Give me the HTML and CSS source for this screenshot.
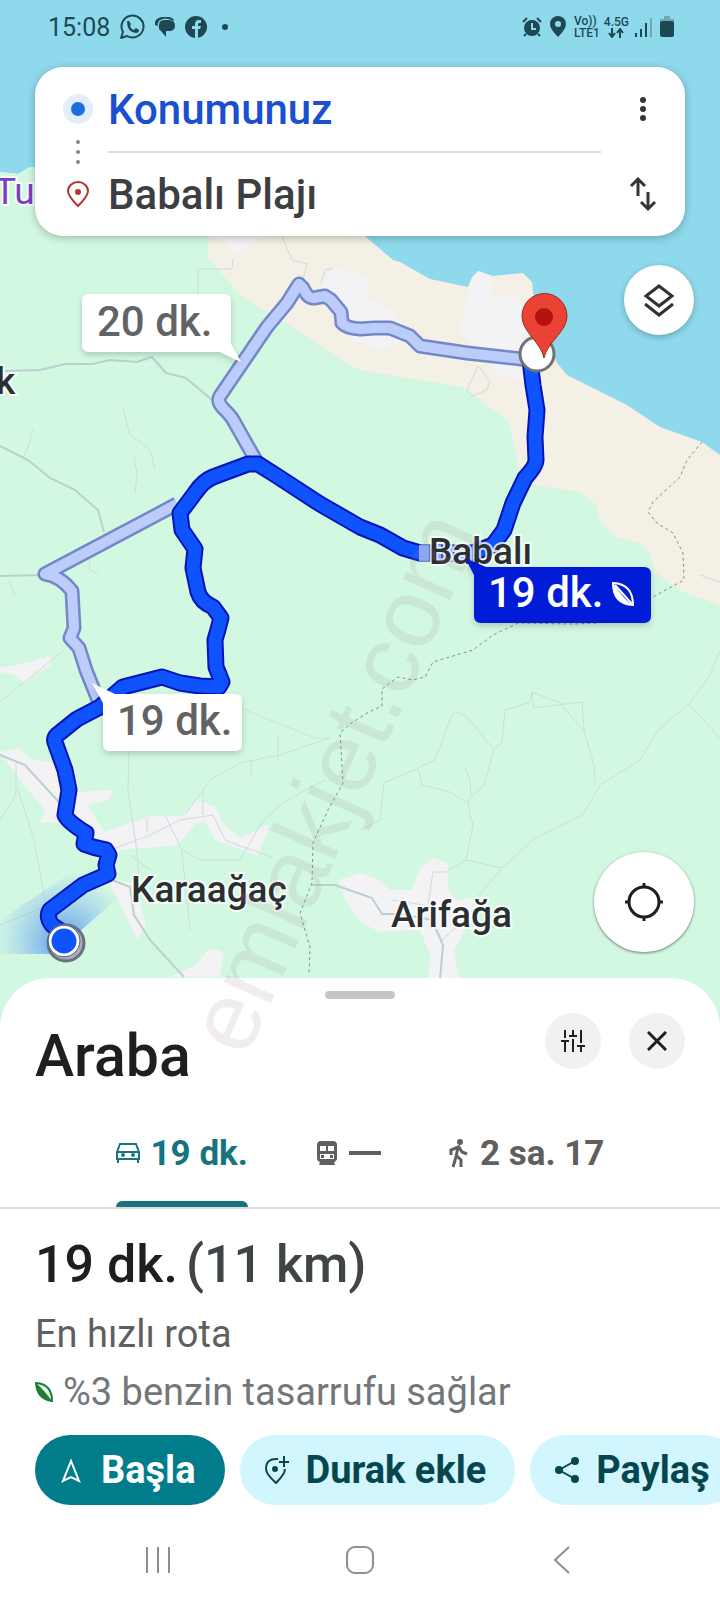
FILE: index.html
```html
<!DOCTYPE html>
<html lang="tr">
<head>
    <meta charset="UTF-8">
    <meta name="viewport" content="width=device-width, initial-scale=1.0">
    <title>Babalı Plajı</title>
    <link rel="stylesheet" href="styles.css">
</head>
<body>
    <div class="map">
        <svg class="map-canvas" viewBox="0 0 720 1040">
            <defs>
                <radialGradient id="beam" gradientUnits="userSpaceOnUse" cx="64" cy="941" r="72">
                    <stop offset="0" stop-color="#4a8df0" stop-opacity="0.9"/>
                    <stop offset="1" stop-color="#8fc0f0" stop-opacity="0"/>
                </radialGradient>
                <filter id="shadow" x="-20%" y="-20%" width="140%" height="160%">
                    <feDropShadow dx="0" dy="3" stdDeviation="3" flood-color="#000" flood-opacity="0.18"/>
                </filter>
            </defs>

            <!-- land -->
            <rect width="720" height="1040" fill="#8ed9ec"/>
            <path d="M0 172L18 174L30 167H200V232H360L393 260L400 262L430 279L468 287L472 277L478 271L493 276L523 273L532 282L534 300L557 363L567 375L627 405L660 427L702 442L720 455V1040H0Z" fill="#f5f0e5"/>
            <path d="M0 172L18 174L30 167H208V258L216 267L240 295L300 332L345 362L360 370L420 380L462 387L480 400L508 420L513 440L519 468L535 485L580 492L597 505L599 520L617 538L640 543L650 553L655 572L680 590L720 606V1040H0Z" fill="#d2f8e2"/>
            <g fill="#f3f2f5">
                <path d="M208 236H262L250 245L235 255L222 240Z"/>
                <path d="M322 284L333 266L367 277L368 298L392 310L404 340L385 350L350 340L325 300Z"/>
                <path d="M470 283L478 271L494 278L490 297L514 296L530 310V384L500 375L480 350L460 334Z"/>
                <path d="M0 752L18 748L32 760L68 764L76 792L112 790L110 799L88 806L104 832L150 816L182 816L196 800L215 806L222 822L240 838L270 824L258 856L215 840L205 822L195 824L178 845L120 850L110 878L134 884L146 925L138 940L108 880L90 836L70 824L40 822L45 810L16 775Z"/>
                <path d="M0 668L30 662L50 656L52 664L24 682L12 674L0 672Z"/>
                <path d="M170 977L195 965L210 948L224 952L220 977Z"/>
                <path d="M338 880L360 873L376 878L390 890H412L420 868L434 858L448 864V888L456 900L474 898L472 918L454 950L460 985H428L430 955L420 930L380 932L360 922L345 900Z"/>
            </g>

            <!-- minor roads -->
            <g class="road">
                <path d="M198 294V269H232L233 258M282 236L292 260L307 264L303 280M321 283L325 270L333 268"/>
                <path d="M123 407L130 435L142 443L151 452L155 470M134 456L137 475L135 493M33 430L28 447L22 460M89 560L90 570L98 574M9 580L15 597"/>
                <path d="M467 390L478 366L490 380L487 390L472 396ZM700 575L720 582"/>
                <path d="M0 702L64 650M18 790L34 840L45 900M0 820L16 795V762M0 925L50 905"/>
                <path d="M240 708L315 738H330M330 738L280 755L240 763L210 780L185 815M278 760V735M251 760V777M129 750L128 790L137 852L140 900M110 850L150 835L180 820L213 815L225 840L240 846L272 857M203 790V815M147 818V832M165 815L182 850L200 860H240L262 822L280 805L302 792L325 780"/>
                <path d="M720 650L710 675L689 704L658 730L640 760L600 785L583 815L535 838L502 868L475 900M689 704L720 738"/>
                <path d="M361 830L380 820L384 783L418 768L435 760L452 715L458 712L468 718L494 750L486 778L484 785L468 800L470 815L473 825L466 860L502 868M418 768L422 785L450 792L466 802M494 750L502 742L505 710L530 702L532 692L560 703L584 731L594 765L595 785M532 692L534 708L582 702L584 731M465 767L470 780L471 795"/>
                <path d="M466 860L446 872H433L428 905M442 940L475 910M392 900L430 906M182 852L190 930M130 855L150 870"/>
            </g>
            <g class="main-road">
                <path d="M5 371L40 370L65 364H93L110 360L137 362L152 357L166 373L186 378L212 400"/>
                <path d="M0 446L28 460L50 478L75 490L98 510L104 532M0 576L45 575"/>
                <path d="M0 755L25 765L68 812M112 880L130 887L134 915L150 940L184 977M312 885H335L372 898L382 914H400L432 920L443 945L440 980"/>
            </g>
            <path class="border-line" d="M702 442L687 460L680 477L653 502L648 512L657 523L673 533L683 553L684 580L653 597L597 623L573 624L518 623L493 635L473 650L433 662L425 677L413 680L398 677L382 689L382 706L367 713L350 724L340 733L343 783L328 810L313 843L312 883L300 913L310 947L309 975"/>

            <path d="M64 945L118 898L75 870L0 920V954H64Z" fill="url(#beam)"/>

            <!-- routes -->
            <path class="alt-edge" d="M258 464L232 418Q228 413 222 407Q217 401 220 396L267 327L287 303L299 284L303 288Q308 299 314 298L325 296L331 300L341 312L342 323Q346 328 360 329L375 328H390L410 336L420 346L467 353L530 360"/>
            <path class="alt-fill" d="M258 464L232 418Q228 413 222 407Q217 401 220 396L267 327L287 303L299 284L303 288Q308 299 314 298L325 296L331 300L341 312L342 323Q346 328 360 329L375 328H390L410 336L420 346L467 353L530 360"/>
            <path class="alt-edge" d="M177 504L45 574Q60 576 72 591L74 628L70 638L79 648L86 670L100 705"/>
            <path class="alt-fill" d="M177 504L45 574Q60 576 72 591L74 628L70 638L79 648L86 670L100 705"/>
            <path class="route-edge" d="M530 360L533 385L537 410L535 437L536 460Q536 466 525 478L513 503L504 530L493 545L473 553H420L403 548L380 535L360 527L320 504L277 476L258 464H248L213 477Q203 481 195 493L180 513L182 530L195 549L193 568L198 592Q201 602 213 607L221 618Q218 630 215 640L216 667L222 682L219 687L200 686L180 683L162 677L123 687L100 707L77 719L57 735Q53 739 56 745L65 770L69 790L65 815Q68 822 86 833L84 844Q94 848 106 850L109 855L106 865L108 874L83 885L50 910Q46 917 52 925L62 932"/>
            <path class="route-fill" d="M530 360L533 385L537 410L535 437L536 460Q536 466 525 478L513 503L504 530L493 545L473 553H420L403 548L380 535L360 527L320 504L277 476L258 464H248L213 477Q203 481 195 493L180 513L182 530L195 549L193 568L198 592Q201 602 213 607L221 618Q218 630 215 640L216 667L222 682L219 687L200 686L180 683L162 677L123 687L100 707L77 719L57 735Q53 739 56 745L65 770L69 790L65 815Q68 822 86 833L84 844Q94 848 106 850L109 855L106 865L108 874L83 885L50 910Q46 917 52 925L62 932"/>
            <path d="M424 545V561M436 545V561M448 545V561M460 546V560" stroke="#c5d2fa" stroke-width="10" opacity="0.7"/>

            <!-- current position -->
            <circle cx="66" cy="943" r="18" fill="#a9adb5" stroke="#6b7080" stroke-width="3"/>
            <circle cx="64" cy="941" r="14" fill="#0f53ff" stroke="#fff" stroke-width="3"/>
            <circle cx="64" cy="941" r="16" fill="none" stroke="#566a9c" stroke-width="1"/>

            <!-- destination -->
            <circle cx="537" cy="354" r="17" fill="#fff" stroke="#6f7378" stroke-width="3"/>
            <path d="M544 358C541 342 522 332 522 316A22 22 0 0 1 567 316C567 332 547 342 544 358Z" fill="#ea4335" stroke="#a52714" stroke-width="1"/>
            <circle cx="544" cy="317" r="9" fill="#b31412"/>

            <g class="place">
                <text x="-4" y="394">k</text>
                <text x="429" y="564">Babalı</text>
                <text x="131" y="902">Karaağaç</text>
                <text x="391" y="927">Arifağa</text>
            </g>
            <text class="poi" x="-6" y="204">Tuz</text>

            <g filter="url(#shadow)">
                <path d="M89 294H224Q231 294 231 301V344L241 362L220 352H89Q82 352 82 345V301Q82 294 89 294Z" fill="#fff"/>
                <path d="M92 683L115 694H235Q242 694 242 701V744Q242 751 235 751H110Q103 751 103 744V703Z" fill="#fff"/>
                <path d="M465 558L486 567H644Q651 567 651 574V616Q651 623 644 623H481Q474 623 474 616V575Z" fill="#021bd6"/>
            </g>
            <g class="callout">
                <text x="97" y="336">20 dk.</text>
                <text x="117" y="735">19 dk.</text>
                <text class="callout-active" x="488" y="607">19 dk.</text>
            </g>
            <path d="M613 583Q633 584 633 605Q613 604 613 583ZM615 585L632 604" fill="none" stroke="#fff" stroke-width="2"/>
            <path d="M613 583Q613 604 633 605Q626 602 613 583Z" fill="#fff"/>
        </svg>

        <header class="status-bar">
            <div class="status-left">
                <time>15:08</time>
                <svg width="26" height="26" viewBox="0 0 26 26">
                    <path d="M2 24L4 18A11 11 0 1 1 8 22Z" fill="none" stroke="#1f4854" stroke-width="2" stroke-linejoin="round"/>
                    <path d="M8 8Q9 6 10 7L12 10L11 12Q12 15 15 16L17 14L20 16Q20 19 17 19Q8 18 8 8Z" fill="#1f4854"/>
                </svg>
                <svg width="22" height="22" viewBox="0 0 22 22">
                    <path d="M1 9Q0 2 8 1H15Q20 2 20 5Q10 0 5 5Q3 8 4 10Z" fill="#1f4854"/>
                    <path d="M5 9Q5 4 11 4H15Q21 4 21 10Q21 15 15 15H12V21L7 15Q4 13 5 9Z" fill="#1f4854"/>
                </svg>
                <svg width="22" height="22" viewBox="0 0 22 22">
                    <circle cx="11" cy="11" r="11" fill="#1f4854"/>
                    <path d="M10 22V13H7V10H10V8Q10 4 14 4H16V7H14Q13 7 13 9V10H16L15 13H13V22Z" fill="#8ed9ec"/>
                </svg>
                <span class="status-dot"></span>
            </div>
            <div class="status-right">
                <svg width="20" height="20" viewBox="0 0 20 20">
                    <circle cx="10" cy="11" r="8" fill="#1f4854"/>
                    <path d="M1 5L5 1M19 5L15 1M4 17L2 19M16 17L18 19" stroke="#1f4854" stroke-width="2"/>
                    <path d="M10 6V12H14" fill="none" stroke="#8ed9ec" stroke-width="2"/>
                </svg>
                <svg width="24" height="22" viewBox="0 0 24 22">
                    <path d="M12 21Q4 13 4 8A8 8 0 0 1 20 8Q20 13 12 21Z" fill="#1f4854"/>
                    <circle cx="12" cy="8" r="3" fill="#8ed9ec"/>
                </svg>
                <span class="status-tiny">Vo))<br>LTE1</span>
                <span class="status-tiny">4.5G
                    <svg width="16" height="10" viewBox="0 0 16 10">
                        <path d="M4 0V9M1 5L4 9L7 5M12 10V1M9 5L12 1L15 5" fill="none" stroke="#1f4854" stroke-width="2"/>
                    </svg>
                </span>
                <svg width="22" height="20" viewBox="0 0 22 20">
                    <path d="M3 16V20M8 12V20M13 6V20" stroke="#1f4854" stroke-width="2"/>
                    <path d="M18 1V20" stroke="#6fa9b8" stroke-width="2"/>
                </svg>
                <svg width="16" height="22" viewBox="0 0 16 22">
                    <path d="M5 0H11V3H15V6H1V3H5Z" fill="#6fa9b8"/>
                    <rect x="1" y="5" width="14" height="16" rx="2" fill="#1f4854"/>
                </svg>
            </div>
        </header>

        <form class="directions">
            <label class="stop-icon" for="origin" aria-label="Başlangıç">
                <svg width="32" height="32" viewBox="0 0 32 32">
                    <circle cx="16" cy="16" r="15" fill="#e4edfb"/>
                    <circle cx="16" cy="16" r="7" fill="#1a6fe0"/>
                </svg>
            </label>
            <input class="origin" id="origin" type="text" value="Konumunuz">
            <button class="icon-button" type="button" aria-label="Diğer seçenekler">
                <svg width="24" height="28" viewBox="0 0 24 28" fill="#333639">
                    <circle cx="12" cy="5" r="3"/><circle cx="12" cy="14" r="3"/><circle cx="12" cy="23" r="3"/>
                </svg>
            </button>
            <svg class="stop-dots" width="4" height="26" viewBox="0 0 4 26" fill="#888">
                <circle cx="2" cy="3" r="2"/><circle cx="2" cy="13" r="2"/><circle cx="2" cy="23" r="2"/>
            </svg>
            <hr>
            <label class="stop-icon stop-end" for="destination" aria-label="Varış yeri">
                <svg width="24" height="28" viewBox="0 0 24 28">
                    <path d="M12 26Q2 16 2 11A10 9 0 0 1 22 11Q22 16 12 26Z" fill="none" stroke="#b3352d" stroke-width="2"/>
                    <circle cx="12" cy="12" r="3" fill="#b3352d"/>
                </svg>
            </label>
            <input id="destination" type="text" value="Babalı Plajı">
            <button class="icon-button" type="button" aria-label="Yer değiştir">
                <svg width="28" height="36" viewBox="0 0 28 36" fill="none" stroke="#333639" stroke-width="3">
                    <path d="M9 20V3M2 10L9 3L16 10M19 16V33M12 26L19 33L26 26"/>
                </svg>
            </button>
        </form>

        <button class="fab" aria-label="Katmanlar">
            <svg width="32" height="34" viewBox="0 0 32 34" fill="none" stroke="#2f3235" stroke-width="3">
                <path d="M16 3L29 13L16 23L3 13ZM2 21L16 32L30 21"/>
            </svg>
        </button>
        <button class="fab fab-locate" aria-label="Konumum">
            <svg width="40" height="40" viewBox="0 0 40 40" fill="none" stroke="#1d1f20" stroke-width="3">
                <circle cx="20" cy="20" r="15"/>
                <path d="M20 1V6M20 34V39M1 20H6M34 20H39"/>
            </svg>
        </button>
    </div>

    <main class="sheet">
        <div class="handle"></div>
        <div class="sheet-head">
            <h1>Araba</h1>
            <button class="round" aria-label="Rota seçenekleri">
                <svg width="26" height="24" viewBox="0 0 26 24" fill="none" stroke="#1f1f1f" stroke-width="2">
                    <path d="M5 1V9M1 12H9M5 12V23M13 1V6M9 7H17M13 10V23M21 1V14M17 17H25M21 17V23"/>
                </svg>
            </button>
            <button class="round" aria-label="Kapat">
                <svg width="20" height="20" viewBox="0 0 20 20" stroke="#1f1f1f" stroke-width="3">
                    <path d="M1 1L19 19M19 1L1 19"/>
                </svg>
            </button>
        </div>

        <div class="tabs" role="tablist">
            <button class="tab tab-active" role="tab" aria-selected="true">
                <svg width="24" height="22" viewBox="0 0 24 22" fill="none" stroke="currentColor" stroke-width="2">
                    <path d="M1 10L4 2H20L23 10V17H1ZM1 10H23M2 17V21M22 17V21"/>
                    <circle cx="7" cy="13" r="1"/><circle cx="17" cy="13" r="1"/>
                </svg>
                19 dk.
            </button>
            <button class="tab" role="tab" aria-selected="false">
                <svg width="22" height="26" viewBox="0 0 22 26">
                    <path fill="currentColor" fill-rule="evenodd" d="M5 1H17Q21 1 21 5V18Q21 21 18 22L19 25H3L4 22Q1 21 1 18V5Q1 1 5 1ZM4 6V11H10V6ZM12 6V11H18V6ZM4 14V19H18V14Z"/>
                    <path fill="currentColor" d="M5 15H8V18H5ZM14 15H17V18H14Z"/>
                </svg>
                <span class="dash" aria-label="Yok"></span>
            </button>
            <button class="tab" role="tab" aria-selected="false">
                <svg width="20" height="30" viewBox="0 0 20 30" fill="none" stroke="currentColor" stroke-width="3">
                    <circle cx="11" cy="4" r="3" fill="currentColor" stroke="none"/>
                    <path d="M2 17V12L9 9L7 19L4 29M8 18L12 22V29M10 9L13 14L18 16"/>
                </svg>
                2 sa. 17
            </button>
        </div>

        <section class="summary">
            <h2>19 dk. <span>(11 km)</span></h2>
            <p>En hızlı rota</p>
            <p class="eco">
                <svg width="18" height="20" viewBox="0 0 18 20">
                    <path d="M1 1Q17 2 17 19Q2 17 1 1Z" fill="#e4f5e8" stroke="#1e7d34" stroke-width="2"/>
                    <path d="M1 1Q8 7 17 19Q2 17 1 1Z" fill="#1e7d34"/>
                </svg>
                %3 benzin tasarrufu sağlar
            </p>
        </section>

        <div class="actions">
            <button class="action action-start">
                <svg width="24" height="28" viewBox="0 0 24 28" fill="none" stroke="currentColor" stroke-width="2">
                    <path d="M11 5L3 25L11 21L19 25Z"/>
                </svg>
                Başla
            </button>
            <button class="action">
                <svg width="24" height="28" viewBox="0 0 24 28" fill="none" stroke="currentColor" stroke-width="2">
                    <path d="M13 3Q1 2 1 13Q1 18 11 27Q20 18 20 13M19 0V11M14 6H24"/>
                    <circle cx="10" cy="13" r="2" fill="currentColor"/>
                </svg>
                Durak ekle
            </button>
            <button class="action">
                <svg width="24" height="28" viewBox="0 0 24 28" fill="currentColor" stroke="currentColor" stroke-width="2">
                    <path d="M20 5L4 14L20 23" fill="none"/>
                    <circle cx="20" cy="5" r="3"/><circle cx="4" cy="14" r="3"/><circle cx="20" cy="23" r="3"/>
                </svg>
                Paylaş
            </button>
        </div>

        <nav class="system-nav">
            <button aria-label="Son uygulamalar">
                <svg width="28" height="28" viewBox="0 0 28 28" stroke="#8e8e8e" stroke-width="2">
                    <path d="M3 1V27M14 1V27M25 1V27"/>
                </svg>
            </button>
            <button aria-label="Ana ekran">
                <svg width="28" height="28" viewBox="0 0 28 28" fill="none" stroke="#8e8e8e" stroke-width="2">
                    <rect x="1" y="1" width="26" height="26" rx="8"/>
                </svg>
            </button>
            <button aria-label="Geri">
                <svg width="28" height="28" viewBox="0 0 28 28" fill="none" stroke="#8e8e8e" stroke-width="2">
                    <path d="M21 1L7 14L21 27"/>
                </svg>
            </button>
        </nav>
    </main>

    <svg class="watermark" viewBox="0 0 720 1600" aria-hidden="true">
        <text x="246" y="1059" transform="rotate(-66 246 1059)">emlakjet.com</text>
    </svg>
</body>
</html>
```
FILE: styles.css
```css
* {
    box-sizing: border-box;
}
body {
    display: flex;
    flex-direction: column;
    position: relative;
    min-height: 100vh;
    margin: 0;
    overflow-x: hidden;
    font-family: Roboto, "Liberation Sans", sans-serif;
    background-color: #fff;
}
button {
    display: flex;
    align-items: center;
    justify-content: center;
    padding: 0;
    border: none;
    background: none;
    color: inherit;
    font-family: inherit;
    cursor: pointer;
}
svg {
    flex-shrink: 0;
}

/* map */
.map {
    display: flex;
    flex-direction: column;
    flex: 1;
    position: relative;
    overflow: hidden;
    padding-bottom: 76px;
    background-color: #d2f8e2;
}
.map-canvas {
    position: absolute;
    top: 0;
    left: 0;
    width: 100%;
}
.road,
.main-road {
    fill: none;
    stroke: #cddcdb;
    stroke-width: 1;
}
.main-road {
    stroke: #bccfce;
    stroke-width: 2;
}
.border-line {
    fill: none;
    stroke: #7f9389;
    stroke-width: 1;
    stroke-dasharray: 3 3;
}
.alt-edge,
.alt-fill,
.route-edge,
.route-fill {
    fill: none;
    stroke-linejoin: round;
}
.alt-edge {
    stroke: #7288c8;
    stroke-width: 15;
}
.alt-fill {
    stroke: #bccdfb;
    stroke-width: 10;
}
.route-edge {
    stroke: #0415b8;
    stroke-width: 17;
}
.route-fill {
    stroke: #0f53ff;
    stroke-width: 13;
}
.place,
.poi {
    font-size: 37px;
    font-weight: 500;
    fill: #2c2f31;
    stroke: #fff;
    stroke-width: 4;
    stroke-opacity: 0.8;
    paint-order: stroke;
}
.poi {
    font-weight: 400;
    fill: #7b3fc4;
}
.callout {
    font-size: 42px;
    font-weight: 500;
    fill: #626365;
}
.callout-active {
    fill: #fff;
}

/* status bar */
.status-bar {
    display: flex;
    align-items: center;
    justify-content: space-between;
    position: relative;
    height: 54px;
    margin-bottom: 13px;
    padding: 0 45px 0 48px;
    color: #1f4854;
    font-size: 25px;
}
.status-left,
.status-right {
    display: flex;
    align-items: center;
    gap: 9px;
}
.status-right {
    gap: 4px;
}
.status-dot {
    width: 6px;
    height: 6px;
    margin-left: 6px;
    border-radius: 50%;
    background-color: #1f4854;
}
.status-tiny {
    display: flex;
    flex-direction: column;
    align-items: center;
    font-size: 12px;
    font-weight: 500;
    line-height: 12px;
}

/* directions card */
.directions {
    display: grid;
    grid-template-columns: 60px 1fr 84px;
    grid-template-rows: 84px 1px 84px;
    align-items: center;
    position: relative;
    margin: 0 35px;
    padding-left: 13px;
    border-radius: 28px;
    background-color: #fff;
    box-shadow: 0 2px 8px rgba(0, 0, 0, 0.25);
}
.directions input {
    width: 100%;
    padding: 0;
    border: none;
    outline: none;
    background: none;
    color: #3c3e41;
    font-family: inherit;
    font-size: 42px;
    font-weight: 500;
}
.directions .origin {
    color: #1a4fd0;
}
.directions hr {
    grid-column: 2;
    width: 100%;
    height: 2px;
    margin: 0;
    border: none;
    background-color: #dadce0;
}
.stop-icon,
.stop-dots {
    display: block;
    justify-self: center;
}
.stop-icon svg {
    display: block;
}
.stop-end {
    grid-column: 1;
}
.icon-button {
    width: 100%;
    height: 60px;
}

.fab {
    align-self: flex-end;
    position: relative;
    width: 70px;
    height: 70px;
    margin: 29px 26px 0;
    border-radius: 50%;
    background-color: #fff;
    box-shadow: 0 2px 6px rgba(0, 0, 0, 0.25);
}
.fab-locate {
    width: 100px;
    height: 100px;
    margin-top: auto;
    box-shadow: 0 1px 3px rgba(0, 0, 0, 0.5);
}

/* bottom sheet */
.sheet {
    position: relative;
    margin-top: -50px;
    border-radius: 50px 50px 0 0;
    background-color: #fff;
    overflow: hidden;
}
.handle {
    width: 70px;
    height: 8px;
    margin: 13px auto 0;
    border-radius: 4px;
    background-color: #c6c6c6;
}
.sheet-head {
    display: flex;
    gap: 28px;
    height: 120px;
    padding: 14px 35px 0;
}
.sheet-head h1 {
    flex: 1;
    margin: 0;
    padding-top: 11px;
    color: #1f1f1f;
    font-size: 59px;
    font-weight: 500;
    line-height: 64px;
}
.round {
    width: 56px;
    height: 56px;
    border-radius: 50%;
    background-color: #f1f1f1;
}
.tabs {
    display: flex;
    justify-content: center;
    gap: 68px;
    border-bottom: 2px solid #dadce0;
}
.tab {
    position: relative;
    gap: 11px;
    height: 88px;
    padding-bottom: 20px;
    color: #5f5f60;
    font-size: 35px;
    font-weight: 700;
}
.tab-active {
    color: #16747f;
}
.tab-active::after {
    content: "";
    position: absolute;
    left: 0;
    right: 0;
    bottom: 0;
    height: 6px;
    border-radius: 6px 6px 0 0;
    background-color: #16747f;
}
.dash {
    width: 32px;
    height: 4px;
    background-color: #5f5f60;
}
.summary {
    padding: 24px 35px 0;
}
.summary h2 {
    display: flex;
    gap: 8px;
    margin: 0 0 8px;
    color: #1f1f1f;
    font-size: 52px;
    font-weight: 500;
    line-height: 64px;
}
.summary h2 span {
    color: #3f4447;
}
.summary p {
    display: flex;
    align-items: center;
    gap: 10px;
    height: 58px;
    margin: 0;
    color: #5f5f60;
    font-size: 38px;
}
.summary .eco {
    color: #73777a;
}
.actions {
    display: flex;
    gap: 15px;
    padding: 14px 0 0 35px;
    overflow: hidden;
}
.action {
    flex-shrink: 0;
    gap: 17px;
    height: 70px;
    padding: 0 29px 0 25px;
    border-radius: 35px;
    background-color: #d2f6fd;
    color: #06464f;
    font-size: 38px;
    font-weight: 700;
}
.action-start {
    background-color: #007c8b;
    color: #fff;
}
.system-nav {
    display: flex;
    justify-content: center;
    gap: 174px;
    padding: 41px 0 26px;
}

.watermark {
    position: absolute;
    top: 0;
    left: 0;
    width: 100%;
    pointer-events: none;
}
.watermark text {
    font-family: "Liberation Sans", sans-serif;
    font-size: 98px;
    fill: #a08890;
    fill-opacity: 0.15;
}
```
